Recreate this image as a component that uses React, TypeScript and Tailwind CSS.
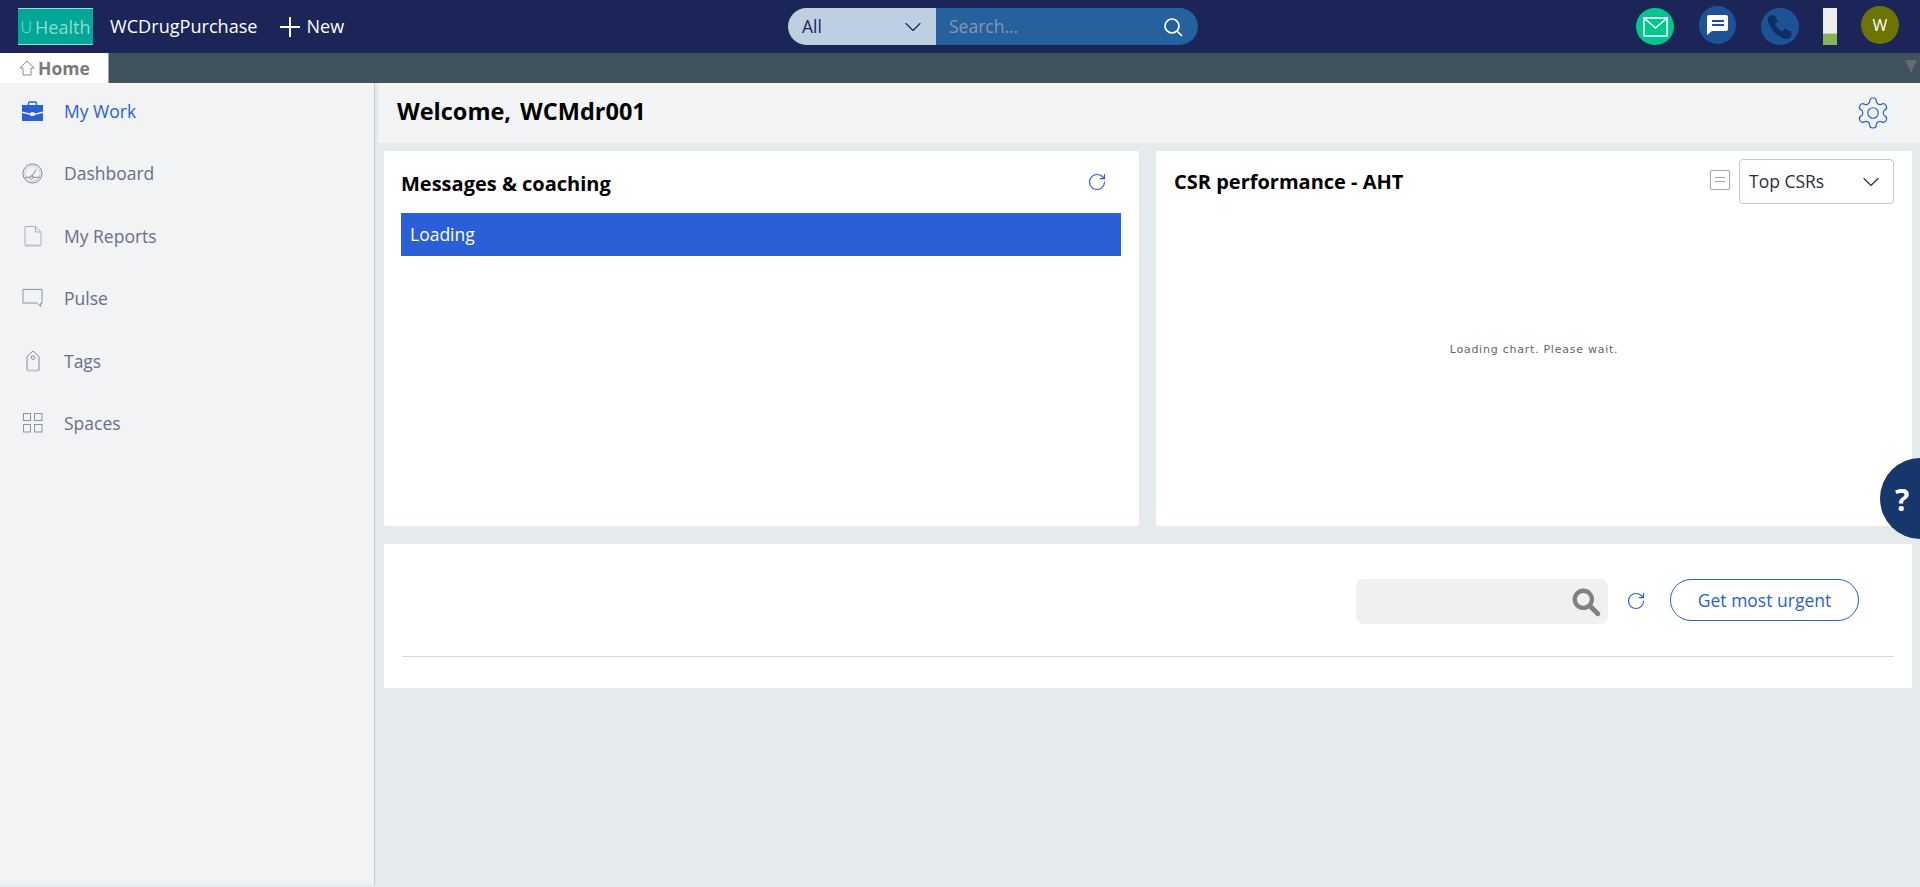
import React from "react";
import { ChevronDown, RotateCw } from "lucide-react";

const BLUE = "#2a5fd8";

const BriefcaseIcon = () => (
  <svg width="21" height="20" viewBox="0 0 21 20">
    <path d="M6.500 4V2.200C6.500 1.400 7 1 7.800 1h5.400c.8 0 1.300.4 1.300 1.200V4" fill="none" stroke="#2a5fd8" strokeWidth="1.300" />
    <path d="M0 4h21v6.500l-8.500 2v-1.200h-4v1.200L0 10.500z" fill="#2a5fd8" />
    <path d="M0 12l8.500 2v1h4v-1l8.500-2v8H0z" fill="#2a5fd8" />
  </svg>
);

const GaugeIcon = () => (
  <svg width="21" height="21" viewBox="0 0 22 22" fill="none" stroke="#7d8494" strokeWidth="1">
    <circle cx="11" cy="11" r="10" />
    <circle cx="11" cy="11" r="8" strokeOpacity="0.4" />
    <path d="M10 14.500L15 6.500" />
    <circle cx="10" cy="15" r="1.600" />
    <path d="M3 15h5.500M11.500 15H19" />
  </svg>
);

const PageIcon = () => (
  <svg width="18" height="22" viewBox="0 0 18 22" fill="none" stroke="#a9afbc" strokeWidth="1">
    <path d="M1 1.500h10.500L17 7v13.500H1z" />
    <path d="M11.500 1.500V7H17" />
    <path d="M1 20.500h16" strokeWidth="2" stroke="#bfc3cd" />
  </svg>
);

const BubbleIcon = () => (
  <svg width="21" height="20" viewBox="0 0 22 20" fill="none" stroke="#868c9c" strokeWidth="1">
    <path d="M1 1h20v14.500h-1.500V19l-3.500-3.500H1z" />
    <path d="M1 15h15" strokeWidth="2" stroke="#c3c7d0" />
  </svg>
);

const TagIcon = () => (
  <svg width="14" height="22" viewBox="0 0 14 22" fill="none" stroke="#868c9c" strokeWidth="1">
    <path d="M1 20.500V6.500L7 1l6 5.500v14z" />
    <circle cx="7" cy="7.500" r="1.800" />
    <path d="M1 20.500h12" strokeWidth="2" stroke="#c3c7d0" />
  </svg>
);

const GridIcon = () => (
  <svg width="20" height="20" viewBox="0 0 20 20" fill="none" stroke="#8d93a2" strokeWidth="1">
    <rect x="0.500" y="0.500" width="7" height="7" />
    <rect x="11.500" y="0.500" width="7.500" height="7" />
    <rect x="0.500" y="11.500" width="7" height="7.500" />
    <rect x="11.500" y="11.500" width="7.500" height="7.500" />
  </svg>
);

const navItems = [
  { label: "My Work", icon: <BriefcaseIcon />, active: true },
  { label: "Dashboard", icon: <GaugeIcon /> },
  { label: "My Reports", icon: <PageIcon /> },
  { label: "Pulse", icon: <BubbleIcon /> },
  { label: "Tags", icon: <TagIcon /> },
  { label: "Spaces", icon: <GridIcon /> },
];

const RefreshIcon = () => (
  <RotateCw size={20} color={BLUE} strokeWidth={1.400} />
);

const Header = () => (
  <div className="h-[53px] shrink-0 bg-[#1b2558] flex items-center relative">
    <div className="ml-[18px] w-[75px] h-[37px] bg-[#00a797] border-b border-t border-[#9adcd5] flex items-center justify-center text-[#8ddcd4] text-[18px] leading-none">
      <span className="font-light text-[16px] mr-[3px]">U</span>Health
    </div>
    <span className="ml-[17px] text-white text-[18.100px]">WCDrugPurchase</span>
    <svg className="ml-[22px]" width="20" height="20" viewBox="0 0 20 20" stroke="#ffffff" strokeWidth="2">
      <path d="M10 0v20M0 10h20" />
    </svg>
    <span className="ml-[7px] text-white text-[18px]">New</span>

    <div className="absolute left-[788px] top-[8px] flex h-[37px] w-[410px] rounded-full overflow-hidden">
      <div className="w-[148px] bg-[#bdd0e2] flex items-center justify-between pl-[14px] pr-[9px] text-[#1b2558] text-[17.500px]">
        All
        <ChevronDown size={28} color="#1b2558" strokeWidth={1} />
      </div>
      <div className="flex-1 bg-[#26619f] flex items-center justify-between pl-[13px] pr-[15px] text-[#8a97a8] text-[17.500px]">
        Search...
        <svg width="20" height="20" viewBox="0 0 20 20" fill="none" stroke="#ffffff" strokeWidth="1.700">
          <circle cx="9" cy="9" r="7" />
          <path d="M14 14l5 5" />
        </svg>
      </div>
    </div>

    <div className="absolute left-[1636px] top-[8px] w-[38px] h-[37px] rounded-full bg-[#00c78e] flex items-center justify-center">
      <svg width="25" height="20" viewBox="0 0 25 20" fill="none" stroke="#ffffff" strokeWidth="1.600">
        <rect x="1" y="1" width="23" height="18" />
        <path d="M1 1l11.500 10L24 1" />
      </svg>
    </div>
    <div className="absolute left-[1699px] top-[6px] w-[37px] h-[38px] rounded-full bg-[#1d5294] flex items-center justify-center">
      <svg width="21" height="20" viewBox="0 0 21 20">
        <path d="M2 0h17a2 2 0 012 2v12a2 2 0 01-2 2H5l-5 4V2a2 2 0 012-2z" fill="#ffffff" />
        <path d="M5 5h12v2H5zM5 9h12v2H5z" fill="#1d5294" />
      </svg>
    </div>
    <div className="absolute left-[1761px] top-[8px] w-[38px] h-[37px] rounded-full bg-[#1d5294] flex items-center justify-center">
      <svg width="26" height="26" viewBox="0 0 26 26">
        <path d="M3 1.500L7.500 1l3.500 6.500-3 2.500c1 3 4.500 6.500 7.500 7.500l2.500-3 6.500 3.500-.5 4.500c-.5 1.500-2 2.500-4 2.500C12 25 1 13.500 1 5.500c0-2 .5-3.500 2-4z" fill="#0d2f66" />
      </svg>
    </div>
    <div className="absolute left-[1823px] top-[8px] w-[14px] h-[37px] bg-[#eeeeee] flex flex-col justify-end">
      <div className="h-[12px] bg-[#87b556] border-t border-[#c8d8b8]" />
    </div>
    <div className="absolute left-[1861px] top-[6px] w-[38px] h-[38px] rounded-full bg-[#6b7500] flex items-center justify-center text-white text-[16px]">
      W
    </div>
  </div>
);

const TabBar = () => (
  <div className="h-[30px] shrink-0 bg-[#41525f] flex items-stretch relative">
    <div className="w-[109px] bg-white flex items-center pl-[19px] border-r border-[#9aa4ac]">
      <svg width="16" height="16" viewBox="0 0 16 16" fill="none" stroke="#8a8a8a" strokeWidth="1">
        <path d="M0.800 8L8 1l7.200 7H12v7H4V8z" />
      </svg>
      <span className="ml-[3px] text-[17.500px] font-bold text-[#7a7a7a]">Home</span>
    </div>
    <div className="absolute right-[3px] top-[7px] w-0 h-0 border-l-[6px] border-r-[6px] border-t-[13px] border-l-transparent border-r-transparent border-t-[#666a6e]" />
  </div>
);

const Sidebar = () => (
  <div className="w-[375px] shrink-0 mb-[2px] bg-[#f2f3f5] border-r border-[#c5c8cf]">
    {navItems.map((item) => (
      <div key={item.label} className="h-[62.500px] flex items-center first:h-[56px] first:mb-[3px]">
        <span className="w-[64px] pl-[22px] flex justify-start shrink-0">
          <span className="w-[21px] flex justify-center">{item.icon}</span>
        </span>
        <span className={`text-[17.500px] ${item.active ? "text-[#2a5fd8]" : "text-[#68708a]"}`}>
          {item.label}
        </span>
      </div>
    ))}
  </div>
);

const App: React.FC = () => {
  return (
    <div
      className="w-[1920px] h-[887px] overflow-hidden flex flex-col bg-[#e5eaed] relative"
      style={{ fontFamily: '"Open Sans", "Noto Sans", sans-serif' }}
    >
      <Header />
      <TabBar />
      <div className="flex-1 flex min-h-0">
        <Sidebar />
        <div className="flex-1 min-w-0">
          <div className="ml-[3px] h-[60px] bg-[#f2f4f6] flex items-center justify-between pl-[19px] pr-[29px]">
            <h1 className="text-[23.500px] font-bold text-black -mt-[2px]">
              Welcome,<span className="ml-[9px]">WCMdr001</span>
            </h1>
            <svg width="36" height="36" viewBox="0 0 24 24" fill="none" stroke="#2a5fd8" strokeWidth="0.800" strokeLinecap="round" strokeLinejoin="round">
              <path d="M12.220 2h-.440a2 2 0 0 0-2 2v.180a2 2 0 0 1-1 1.730l-.430.250a2 2 0 0 1-2 0l-.150-.080a2 2 0 0 0-2.730.730l-.220.380a2 2 0 0 0 .730 2.730l.150.100a2 2 0 0 1 1 1.720v.510a2 2 0 0 1-1 1.740l-.150.090a2 2 0 0 0-.730 2.730l.220.380a2 2 0 0 0 2.730.730l.150-.080a2 2 0 0 1 2 0l.430.250a2 2 0 0 1 1 1.730V20a2 2 0 0 0 2 2h.440a2 2 0 0 0 2-2v-.180a2 2 0 0 1 1-1.730l.430-.250a2 2 0 0 1 2 0l.150.080a2 2 0 0 0 2.730-.730l.220-.390a2 2 0 0 0-.730-2.730l-.150-.080a2 2 0 0 1-1-1.740v-.500a2 2 0 0 1 1-1.740l.150-.090a2 2 0 0 0 .730-2.730l-.220-.380a2 2 0 0 0-2.730-.730l-.150.080a2 2 0 0 1-2 0l-.430-.250a2 2 0 0 1-1-1.730V4a2 2 0 0 0-2-2z" />
              <circle cx="12" cy="12" r="3.500" />
            </svg>
          </div>

          <div className="pl-[9px] pr-[8px] pt-[8px]">
            <div className="flex gap-[17px] h-[375px]">
              {/* Messages */}
              <div className="w-[755px] bg-white rounded-[2px] pl-[17px] pr-[18px]">
                <div className="h-[62px] flex items-center justify-between pr-[14px]">
                  <h2 className="text-[20px] font-bold text-black mt-[4px]">Messages &amp; coaching</h2>
                  <RefreshIcon />
                </div>
                <div className="h-[43px] bg-[#2a5fd8] flex items-center pl-[9px] text-white text-[17.500px]">
                  Loading
                </div>
              </div>

              {/* CSR chart */}
              <div className="flex-1 bg-white rounded-[2px] flex flex-col">
                <div className="flex items-start justify-between pt-[8px] pl-[18px] pr-[18px]">
                  <h2 className="text-[20px] font-bold text-black mt-[8px]">CSR performance - AHT</h2>
                  <div className="flex items-center gap-[9px]">
                    <div className="w-[20px] h-[20px] border border-[#a6a6a6] rounded-[2px] flex flex-col items-center justify-center gap-[3px] -mt-[4px]">
                      <span className="w-[10px] h-px bg-[#a6a6a6]" />
                      <span className="w-[10px] h-px bg-[#a6a6a6]" />
                    </div>
                    <div className="w-[155px] h-[45px] border border-[#c5c8d2] rounded-[4px] flex items-center justify-between pl-[9px] pr-[8px] text-[17.500px] text-[#2b2f3a]">
                      Top CSRs
                      <ChevronDown size={28} color="#2b2f3a" strokeWidth={1} />
                    </div>
                  </div>
                </div>
                <div className="h-[293px] flex items-center justify-center">
                  <span className="text-[11px] text-[#666666] tracking-[0.750px]" style={{ fontFamily: '"DejaVu Sans", sans-serif' }}>
                    Loading chart. Please wait.
                  </span>
                </div>
              </div>
            </div>

            {/* Worklist */}
            <div className="mt-[18px] h-[144px] bg-white pl-[18px] pr-[18px] flex flex-col">
              <div className="h-[113px] flex items-start justify-end pt-[35px] border-b border-[#d8d8d8]">
                <div className="w-[252px] h-[45px] bg-[#f0f0f0] rounded-[8px] flex items-center justify-end pr-[7px]">
                  <svg width="30" height="30" viewBox="0 0 28 28" fill="none" stroke="#808080">
                    <circle cx="11.500" cy="11.500" r="8" strokeWidth="4" />
                    <path d="M17.500 17.500L25 25" strokeWidth="4.500" strokeLinecap="round" />
                  </svg>
                </div>
                <div className="ml-[18px] mt-[12px]">
                  <RefreshIcon />
                </div>
                <button className="ml-[24px] mr-[35px] w-[189px] h-[42px] rounded-full border border-[#2a5fd8] text-[#2a5fd8] text-[17.500px] flex items-center justify-center">
                  Get most urgent
                </button>
              </div>
            </div>
          </div>
        </div>
      </div>

      <div className="absolute left-[1880px] top-[458px] w-[81px] h-[81px] rounded-full bg-[#17366b] flex items-center pl-[15px] pt-[2px] text-white text-[30px] font-bold">
        ?
      </div>
    </div>
  );
};

export default App;
